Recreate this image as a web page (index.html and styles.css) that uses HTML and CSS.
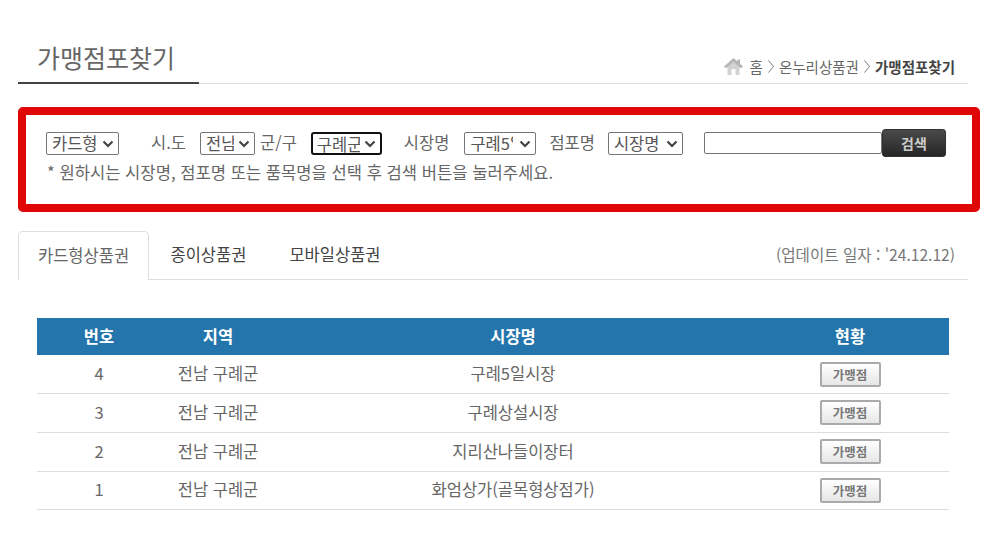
FILE: index.html
```html
<!DOCTYPE html>
<html lang="ko">
<head>
  <meta charset="UTF-8">
  <title>가맹점포찾기</title>
  <link rel="stylesheet" href="styles.css">
</head>
<body>
  <div class="wrap">
    <div class="title-bar">
      <h2 class="page-title">가맹점포찾기</h2>
      <div class="breadcrumb">
        <svg class="home-icon" width="19" height="17" viewBox="0 0 19 17">
          <path d="M3.5 8.5 L9.5 3.2 L15.5 8.5 L15.5 17 L11.5 17 L11.5 11 L7.5 11 L7.5 17 L3.5 17 Z" fill="#d2d2d2"/>
          <path d="M9.5 0 L0 8.6 L1 9.8 L3 9.8 L9.5 3.8 L16 9.8 L18 9.8 L19 8.6 L16 5.8 L16 1.5 L13.5 1.5 L13.5 3.6 Z" fill="#b6b6b6"/>
        </svg>
        <span>홈</span>
        <svg class="sep" width="6" height="13" viewBox="0 0 6 13"><path d="M0.5 0.5 L5.5 6.5 L0.5 12.5" fill="none" stroke="#777" stroke-width="1"/></svg>
        <span>온누리상품권</span>
        <svg class="sep" width="6" height="13" viewBox="0 0 6 13"><path d="M0.5 0.5 L5.5 6.5 L0.5 12.5" fill="none" stroke="#777" stroke-width="1"/></svg>
        <strong>가맹점포찾기</strong>
      </div>
    </div>

    <div class="search-box">
      <div class="search-row">
        <select class="sel sel-type"><option>카드형</option></select>
        <span class="lbl lbl-sido">시.도</span>
        <select class="sel sel-sido"><option>전남</option></select>
        <span class="lbl lbl-gun">군/구</span>
        <select class="sel sel-gun"><option>구례군</option></select>
        <span class="lbl lbl-market">시장명</span>
        <select class="sel sel-market"><option>구례5일시장</option></select>
        <span class="lbl lbl-store">점포명</span>
        <select class="sel sel-store"><option>시장명</option></select>
        <input class="keyword" type="text">
        <button class="search-btn">검색</button>
      </div>
      <p class="search-note">* 원하시는 시장명, 점포명 또는 품목명을 선택 후 검색 버튼을 눌러주세요.</p>
    </div>

    <div class="tabs">
      <a class="tab active">카드형상품권</a>
      <a class="tab">종이상품권</a>
      <a class="tab">모바일상품권</a>
      <span class="update">(업데이트 일자 : '24.12.12)</span>
    </div>

    <table class="list">
      <thead>
        <tr>
          <th class="col-no">번호</th>
          <th class="col-area">지역</th>
          <th class="col-name">시장명</th>
          <th class="col-state">현황</th>
        </tr>
      </thead>
      <tbody>
        <tr><td>4</td><td>전남 구례군</td><td>구례5일시장</td><td><button class="shop-btn">가맹점</button></td></tr>
        <tr><td>3</td><td>전남 구례군</td><td>구례상설시장</td><td><button class="shop-btn">가맹점</button></td></tr>
        <tr><td>2</td><td>전남 구례군</td><td>지리산나들이장터</td><td><button class="shop-btn">가맹점</button></td></tr>
        <tr><td>1</td><td>전남 구례군</td><td>화엄상가(골목형상점가)</td><td><button class="shop-btn">가맹점</button></td></tr>
      </tbody>
    </table>
  </div>
</body>
</html>
```

FILE: styles.css
```css
html, body {
  margin: 0;
  padding: 0;
}
body {
  font-family: "Noto Sans CJK KR", "Noto Sans", sans-serif;
  color: #666;
  background: #fff;
  overflow: hidden;
}
.wrap {
  width: 962px;
  padding: 36px 0 0 18px;
}
/* 제목 */
.title-bar {
  width: 950px;
  height: 48px;
  box-sizing: border-box;
  display: flex;
  justify-content: space-between;
  align-items: flex-end;
  border-bottom: 1px solid #ddd;
}
.page-title {
  margin: 0 0 -1px;
  width: 181px;
  height: 46px;
  box-sizing: border-box;
  padding-left: 19px;
  font-size: 25px;
  font-weight: 400;
  line-height: 38px;
  color: #666;
  border-bottom: 2px solid #444;
}
.breadcrumb {
  display: flex;
  align-items: center;
  gap: 5px;
  padding: 0 13px 2px 0;
  height: 32px;
  box-sizing: border-box;
  font-size: 14.5px;
  color: #666;
}
.breadcrumb strong {
  color: #444;
}
.home-icon {
  margin-right: 2px;
}
/* 검색 */
.search-box {
  width: 962px;
  height: 105px;
  box-sizing: border-box;
  margin-top: 23px;
  padding: 14px 20px 0;
  border: 8px solid #e00606;
  border-radius: 5px;
}
.search-row {
  display: flex;
  align-items: flex-start;
  height: 28px;
  font-size: 16.5px;
}
.sel {
  -webkit-appearance: none;
  appearance: none;
  height: 23px;
  margin-top: 3px;
  padding: 0 20px 0 5px;
  font-family: inherit;
  font-size: 16.5px;
  line-height: 21px;
  color: #555;
  background: #fff url("data:image/svg+xml,%3Csvg xmlns='http://www.w3.org/2000/svg' width='12' height='8'%3E%3Cpath d='M1.5 1.5 L6 6 L10.5 1.5' fill='none' stroke='%23444' stroke-width='2.2'/%3E%3C/svg%3E") no-repeat right 4px center;
  border: 1px solid #767676;
  border-radius: 2px;
}
.sel-type { width: 73px; }
.sel-sido { width: 55px; }
.sel-gun {
  width: 71px;
  padding-left: 4px;
  border: 2px solid #111;
  border-radius: 3px;
}
.sel-market {
  width: 72px;
  padding-right: 22px;
}
.sel-store { width: 75px; }
.lbl {
  white-space: nowrap;
  line-height: 26px;
}
.lbl-sido { margin: 0 14px 0 32px; }
.lbl-gun { margin: 0 14px 0 5px; }
.lbl-market { margin: 0 15px 0 22px; }
.lbl-store { margin: 0 13px 0 13px; }
.keyword {
  width: 178px;
  height: 22px;
  box-sizing: border-box;
  margin: 3px 0 0 21px;
  border: 1px solid #767676;
  border-radius: 2px;
}
.search-btn {
  width: 64px;
  height: 28px;
  padding: 0 0 1px;
  font-family: inherit;
  font-size: 14px;
  font-weight: 700;
  color: #ccc;
  background: linear-gradient(#4a4a4a, #262626);
  border: 1px solid #333;
  border-radius: 3px;
}
.search-note {
  margin: 1px 0 0 1px;
  font-size: 16.6px;
  line-height: 28px;
  color: #666;
}
/* 탭 */
.tabs {
  display: flex;
  align-items: stretch;
  width: 950px;
  height: 49px;
  box-sizing: border-box;
  margin-top: 19px;
  border-bottom: 1px solid #ddd;
  font-size: 16.5px;
}
.tab {
  display: block;
  padding: 0 21.5px;
  line-height: 47px;
  white-space: nowrap;
  color: #444;
}
.tab.active {
  height: 49px;
  box-sizing: border-box;
  width: 131px;
  padding: 0 0 0 19px;
  color: #666;
  background: #fff;
  border: 1px solid #ddd;
  border-bottom: none;
  border-radius: 5px 5px 0 0;
}
.update {
  margin-left: auto;
  padding-right: 13px;
  line-height: 46px;
  font-size: 15.6px;
  color: #777;
}
/* 목록 */
.list {
  width: 912px;
  margin: 38px 0 0 19px;
  border-collapse: collapse;
  table-layout: fixed;
  font-size: 16.5px;
}
.col-no { width: 124px; }
.col-area { width: 114px; }
.col-name { width: 476px; }
.col-state { width: 198px; }
.list th {
  height: 35px;
  padding: 0 0 2px;
  font-size: 16.5px;
  font-weight: 700;
  color: #fff;
  background: #2475ab;
}
.list td {
  height: 35px;
  padding: 0 0 3px;
  text-align: center;
  color: #666;
  border-bottom: 1px solid #ddd;
}
.list td:last-child {
  height: 38px;
  padding: 0;
  vertical-align: top;
}
.list tr:last-child td {
  height: 34px;
}
.list tr:last-child td:last-child {
  height: 37px;
}
.shop-btn {
  display: block;
  width: 61px;
  height: 25px;
  margin: 6px auto 0;
  padding: 0;
  font-family: inherit;
  font-size: 12.5px;
  font-weight: 700;
  color: #777;
  background: linear-gradient(#fff, #e6e6e6);
  border: 2px solid #aaa;
  border-radius: 2px;
}
.list tr:first-child .shop-btn {
  margin-top: 7px;
}
```
